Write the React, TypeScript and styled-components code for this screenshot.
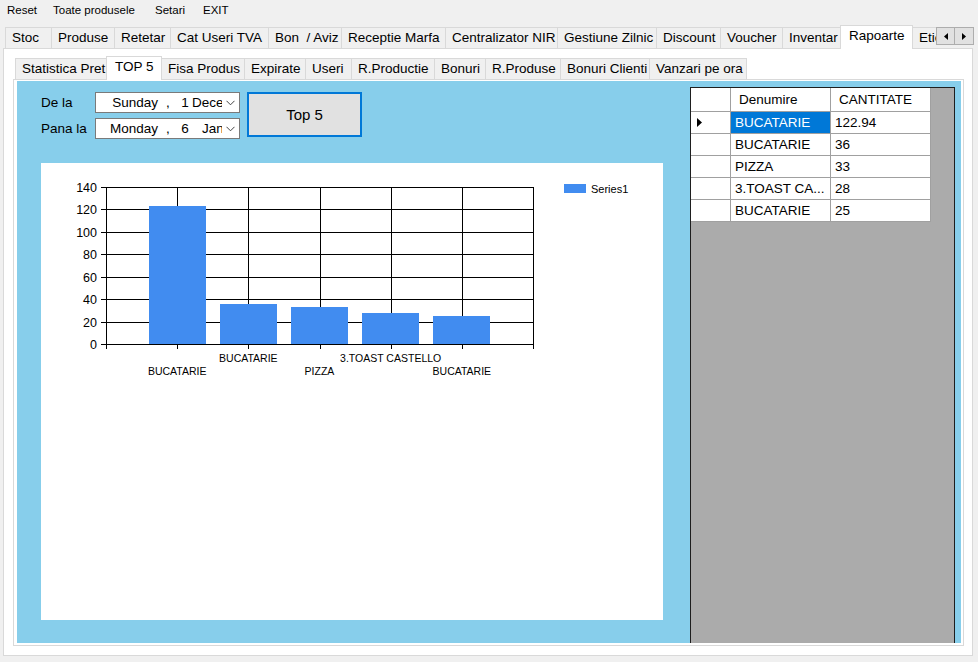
import React from 'react';
import styled, { createGlobalStyle } from 'styled-components';

const GlobalStyle = createGlobalStyle`
  html, body { margin: 0; padding: 0; background: #f0f0f0; }
  body { font-family: "Liberation Sans", Arial, sans-serif; }
`;

const Window = styled.div`
  width: 978px;
  height: 662px;
  overflow: hidden;
  background: #f0f0f0;
  font-family: "Liberation Sans", Arial, sans-serif;
  color: #000;
  display: flex;
  flex-direction: column;
`;

const MenuBar = styled.div`
  height: 20px;
  display: flex;
  align-items: center;
  padding-left: 7px;
  font-size: 11.5px;
`;

const MenuItem = styled.div<{ $w?: number }>`
  width: ${p => (p.$w ? `${p.$w}px` : 'auto')};
  white-space: nowrap;
`;

const StripRow = styled.div<{ $top: number; $pad: number }>`
  margin-top: ${p => p.$top}px;
  height: 24px;
  display: flex;
  padding-left: ${p => p.$pad}px;
  position: relative;
  z-index: 1;
`;

const TabRow = styled.div<{ $w?: number }>`
  width: ${p => (p.$w ? `${p.$w}px` : 'auto')};
  overflow: hidden;
  display: flex;
  align-items: flex-end;
  height: 24px;
`;

const Tab = styled.div<{ $w: number; $active?: boolean }>`
  flex: 0 0 ${p => p.$w}px;
  box-sizing: border-box;
  height: ${p => (p.$active ? 24 : 22)}px;
  border-top: 1px solid #d9d9d9;
  border-right: 1px solid #d9d9d9;
  border-bottom: ${p => (p.$active ? 'none' : '1px solid #d9d9d9')};
  border-left: ${p => (p.$active ? '1px solid #d9d9d9' : 'none')};
  margin-left: ${p => (p.$active ? -1 : 0)}px;
  background: ${p => (p.$active ? '#ffffff' : '#f0f0f0')};
  padding-left: ${p => (p.$active ? 8 : 6)}px;
  font-size: 13.5px;
  line-height: 20px;
  white-space: pre;
  overflow: hidden;
  &:first-child {
    border-left: 1px solid #d9d9d9;
    margin-left: 0;
  }
`;

const ScrollBtns = styled.div`
  display: flex;
  margin-top: 2px;
  height: 18px;
`;

const ScrollBtn = styled.div`
  width: 19px;
  height: 18px;
  box-sizing: border-box;
  border: 1px solid #adadad;
  background: #e1e1e1;
  display: flex;
  align-items: center;
  justify-content: center;
  & + & {
    border-left: none;
  }
`;

const OuterPage = styled.div`
  margin: -1px 0 0 3px;
  width: 970px;
  height: 608px;
  box-sizing: border-box;
  border: 1px solid #d9d9d9;
  background: #fff;
  padding: 7px 0 0 9px;
`;

const InnerPage = styled.div`
  margin-top: -1px;
  width: 951px;
  height: 567px;
  box-sizing: border-box;
  border: 1px solid #d9d9d9;
  background: #fff;
  padding: 1px 2px 1px 3px;
`;

const Panel = styled.div`
  width: 944px;
  height: 562px;
  background: #87ceeb;
  display: flex;
`;

const LeftPane = styled.div`
  width: 673px;
  box-sizing: border-box;
  padding: 11px 0 0 24px;
  display: flex;
  flex-direction: column;
`;

const Controls = styled.div`
  display: grid;
  grid-template-columns: 54px 145px 122px;
  grid-template-rows: 21px 21px;
  row-gap: 5px;
  align-items: center;
`;

const Label = styled.div`
  font-size: 13.5px;
  white-space: nowrap;
`;

const Picker = styled.div`
  box-sizing: border-box;
  height: 21px;
  border: 1px solid #7a7a7a;
  background: #fff;
  display: flex;
  align-items: center;
  font-size: 13.5px;
`;

const PickerText = styled.div`
  width: 126px;
  overflow: hidden;
  display: flex;
  white-space: pre;
`;

const Seg = styled.span<{ $w?: number; $align?: string; $pad?: number }>`
  flex: 0 0 ${p => (p.$w ? `${p.$w}px` : 'auto')};
  text-align: ${p => p.$align || 'left'};
  padding-left: ${p => p.$pad || 0}px;
`;

const Chevron = styled.svg`
  margin-left: 4px;
`;

const TopButton = styled.div`
  grid-column: 3;
  grid-row: 1 / span 2;
  align-self: start;
  margin-left: 7px;
  width: 115px;
  height: 45px;
  box-sizing: border-box;
  border: 2px solid #0078d7;
  background: #e1e1e1;
  display: flex;
  align-items: center;
  justify-content: center;
  font-size: 15px;
`;

const ChartBox = styled.div`
  margin-top: 24px;
  width: 622px;
  height: 457px;
  background: #fff;
`;

const GridPane = styled.div`
  margin-top: 6px;
  width: 265px;
  box-sizing: border-box;
  border: 1px solid #1e1e1e;
  border-bottom: none;
  background: #ababab;
`;

const Table = styled.div`
  display: grid;
  grid-template-columns: 40px 100px 100px;
  grid-template-rows: 24px;
  grid-auto-rows: 22px;
  width: 240px;
`;

const Cell = styled.div<{ $head?: boolean; $sel?: boolean }>`
  box-sizing: border-box;
  border-right: 1px solid #a0a0a0;
  border-bottom: 1px solid #a0a0a0;
  background: ${p => (p.$sel ? '#0078d7' : '#fff')};
  color: ${p => (p.$sel ? '#fff' : '#000')};
  padding-left: ${p => (p.$head ? 8 : 4)}px;
  font-size: 13.5px;
  display: flex;
  align-items: center;
  white-space: nowrap;
  overflow: hidden;
`;

const RowHead = styled.div`
  box-sizing: border-box;
  border-right: 1px solid #a0a0a0;
  border-bottom: 1px solid #a0a0a0;
  background: #fff;
  display: flex;
  align-items: center;
  padding-left: 6px;
`;

const outerTabs: [string, number][] = [
  ['Stoc', 47],
  ['Produse', 63],
  ['Retetar', 56],
  ['Cat Useri TVA', 98],
  ['Bon  / Aviz', 73],
  ['Receptie Marfa', 104],
  ['Centralizator NIR', 112],
  ['Gestiune Zilnic', 99],
  ['Discount', 64],
  ['Voucher', 62],
  ['Inventar', 58],
  ['Rapoarte', 73],
  ['Etichete', 70],
];

const innerTabs: [string, number][] = [
  ['Statistica Pret', 92],
  ['TOP 5', 56],
  ['Fisa Produs', 83],
  ['Expirate', 61],
  ['Useri', 46],
  ['R.Productie', 83],
  ['Bonuri', 51],
  ['R.Produse', 75],
  ['Bonuri Clienti', 89],
  ['Vanzari pe ora', 97],
];

const rows: [string, string][] = [
  ['BUCATARIE', '122.94'],
  ['BUCATARIE', '36'],
  ['PIZZA', '33'],
  ['3.TOAST CA...', '28'],
  ['BUCATARIE', '25'],
];

const chartData = [
  { label: 'BUCATARIE', v: 122.94 },
  { label: 'BUCATARIE', v: 36 },
  { label: 'PIZZA', v: 33 },
  { label: '3.TOAST CASTELLO', v: 28 },
  { label: 'BUCATARIE', v: 25 },
];

const ChevronIcon = () => (
  <Chevron width="9" height="6" viewBox="0 0 9 6">
    <polyline points="0.5,0.8 4.5,4.8 8.5,0.8" fill="none" stroke="#444" strokeWidth="1" />
  </Chevron>
);

const Chart = () => {
  const L = 65;
  const T = 24;
  const B = 181;
  const R = 492;
  const step = (R - L) / 6;
  const scale = (B - T) / 140;
  const ticks = [0, 20, 40, 60, 80, 100, 120, 140];
  return (
    <svg width="622" height="457" viewBox="0 0 622 457" shapeRendering="crispEdges">
      {ticks.map(v => {
        const y = Math.round(B - v * scale) + 0.5;
        return (
          <g key={v}>
            <line x1={L - 5} x2={R} y1={y} y2={y} stroke="#000" strokeWidth="1" />
            <text
              x={56}
              y={y + 4.5}
              textAnchor="end"
              fontSize="12.5"
              fontFamily="Liberation Sans, Arial, sans-serif"
              fill="#000"
              shapeRendering="auto"
            >
              {v}
            </text>
          </g>
        );
      })}
      {[0, 1, 2, 3, 4, 5, 6].map(k => {
        const x = Math.round(L + k * step) + 0.5;
        return <line key={k} x1={x} x2={x} y1={T} y2={B + 5} stroke="#000" strokeWidth="1" />;
      })}
      {chartData.map((d, i) => {
        const k = i + 1;
        const cx = L + k * step;
        const h = d.v * scale;
        return (
          <rect key={i} x={Math.round(cx - 28.5)} y={Math.round(B - h)} width={57} height={Math.round(h)} fill="#418cf0" />
        );
      })}
      {chartData.map((d, i) => {
        const k = i + 1;
        const cx = L + k * step;
        const lower = k % 2 === 1;
        return (
          <text
            key={i}
            x={cx}
            y={lower ? 212 : 199}
            textAnchor="middle"
            fontSize="10.5"
            fontFamily="Liberation Sans, Arial, sans-serif"
            fill="#000"
            shapeRendering="auto"
          >
            {d.label}
          </text>
        );
      })}
      <rect x={523} y={21} width={22} height={9} fill="#418cf0" />
      <text x={550} y={29.5} fontSize="11" fontFamily="Liberation Sans, Arial, sans-serif" fill="#000" shapeRendering="auto">
        Series1
      </text>
    </svg>
  );
};

export default function App() {
  return (
    <>
      <GlobalStyle />
      <Window>
        <MenuBar>
          <MenuItem $w={46}>Reset</MenuItem>
          <MenuItem $w={102}>Toate produsele</MenuItem>
          <MenuItem $w={48}>Setari</MenuItem>
          <MenuItem>EXIT</MenuItem>
        </MenuBar>

        <StripRow $top={5} $pad={5}>
          <TabRow $w={931}>
            {outerTabs.map(([t, w]) => (
              <Tab key={t} $w={w} $active={t === 'Rapoarte'}>
                {t}
              </Tab>
            ))}
          </TabRow>
          <ScrollBtns>
            <ScrollBtn>
              <svg width="4" height="7" viewBox="0 0 4 7">
                <polygon points="4,0 4,7 0,3.5" fill="#000" />
              </svg>
            </ScrollBtn>
            <ScrollBtn>
              <svg width="4" height="7" viewBox="0 0 4 7">
                <polygon points="0,0 0,7 4,3.5" fill="#000" />
              </svg>
            </ScrollBtn>
          </ScrollBtns>
        </StripRow>

        <OuterPage>
          <StripRow $top={0} $pad={2}>
            <TabRow>
              {innerTabs.map(([t, w]) => (
                <Tab key={t} $w={w} $active={t === 'TOP 5'}>
                  {t}
                </Tab>
              ))}
            </TabRow>
          </StripRow>
          <InnerPage>
            <Panel>
              <LeftPane>
                <Controls>
                  <Label>De la</Label>
                  <Picker>
                    <PickerText>
                      <Seg $w={62} $align="right">Sunday</Seg>
                      <Seg $w={20} $align="center">,</Seg>
                      <Seg $w={14} $align="center">1</Seg>
                      <Seg>December 2024</Seg>
                    </PickerText>
                    <ChevronIcon />
                  </Picker>
                  <TopButton>Top 5</TopButton>
                  <Label>Pana la</Label>
                  <Picker>
                    <PickerText>
                      <Seg $w={62} $align="right">Monday</Seg>
                      <Seg $w={20} $align="center">,</Seg>
                      <Seg $w={14} $align="center">6</Seg>
                      <Seg $pad={10}>January 2025</Seg>
                    </PickerText>
                    <ChevronIcon />
                  </Picker>
                </Controls>
                <ChartBox>
                  <Chart />
                </ChartBox>
              </LeftPane>
              <GridPane>
                <Table>
                  <RowHead />
                  <Cell $head>Denumire</Cell>
                  <Cell $head>CANTITATE</Cell>
                  {rows.map(([name, qty], i) => (
                    <React.Fragment key={i}>
                      <RowHead>
                        {i === 0 && (
                          <svg width="5" height="9" viewBox="0 0 5 9">
                            <polygon points="0,0 5,4.5 0,9" fill="#000" />
                          </svg>
                        )}
                      </RowHead>
                      <Cell $sel={i === 0}>{name}</Cell>
                      <Cell>{qty}</Cell>
                    </React.Fragment>
                  ))}
                </Table>
              </GridPane>
            </Panel>
          </InnerPage>
        </OuterPage>
      </Window>
    </>
  );
}
